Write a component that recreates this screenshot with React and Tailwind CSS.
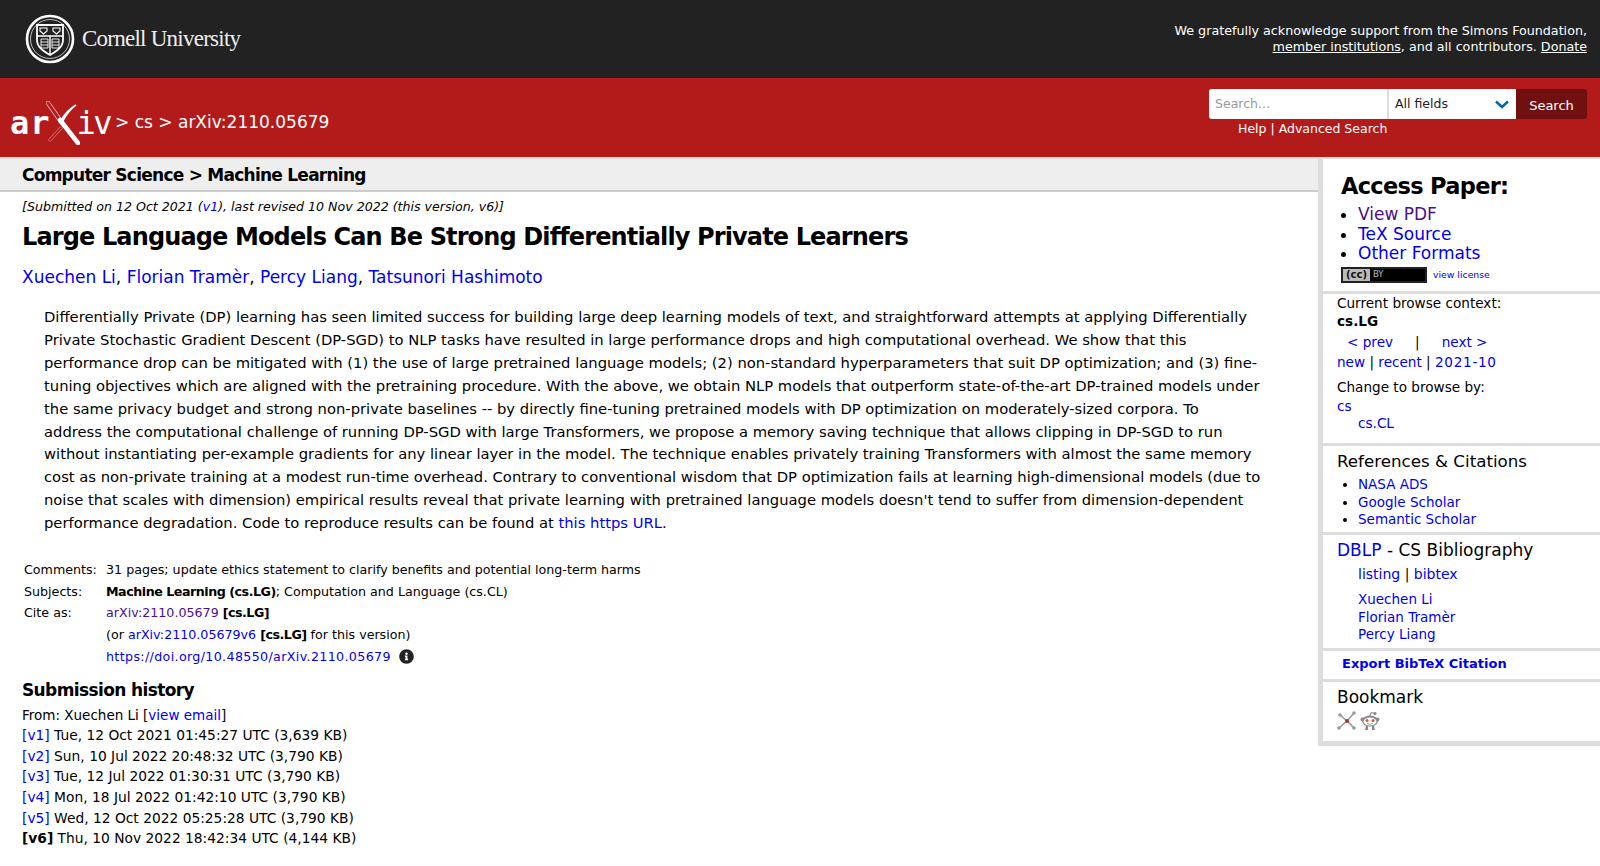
import { FaInfoCircle } from 'react-icons/fa';

const abstractLines = [
  'Differentially Private (DP) learning has seen limited success for building large deep learning models of text, and straightforward attempts at applying Differentially',
  'Private Stochastic Gradient Descent (DP-SGD) to NLP tasks have resulted in large performance drops and high computational overhead. We show that this',
  'performance drop can be mitigated with (1) the use of large pretrained language models; (2) non-standard hyperparameters that suit DP optimization; and (3) fine-',
  'tuning objectives which are aligned with the pretraining procedure. With the above, we obtain NLP models that outperform state-of-the-art DP-trained models under',
  'the same privacy budget and strong non-private baselines -- by directly fine-tuning pretrained models with DP optimization on moderately-sized corpora. To',
  'address the computational challenge of running DP-SGD with large Transformers, we propose a memory saving technique that allows clipping in DP-SGD to run',
  'without instantiating per-example gradients for any linear layer in the model. The technique enables privately training Transformers with almost the same memory',
  "cost as non-private training at a modest run-time overhead. Contrary to conventional wisdom that DP optimization fails at learning high-dimensional models (due to",
  "noise that scales with dimension) empirical results reveal that private learning with pretrained language models doesn't tend to suffer from dimension-dependent",
];

const versions = [
  ['[v1]', 'Tue, 12 Oct 2021 01:45:27 UTC (3,639 KB)'],
  ['[v2]', 'Sun, 10 Jul 2022 20:48:32 UTC (3,790 KB)'],
  ['[v3]', 'Tue, 12 Jul 2022 01:30:31 UTC (3,790 KB)'],
  ['[v4]', 'Mon, 18 Jul 2022 01:42:10 UTC (3,790 KB)'],
  ['[v5]', 'Wed, 12 Oct 2022 05:25:28 UTC (3,790 KB)'],
];

const A = ({ children, className = '' }) => (
  <a href="#" className={`text-[#0000ee] ${className}`}>{children}</a>
);

const CornellSeal = () => (
  <svg width="50" height="50" viewBox="0 0 50 50" fill="none" stroke="#fff">
    <circle cx="25" cy="25" r="23" strokeWidth="2.6" />
    <circle cx="25" cy="25" r="19.5" strokeWidth="0.7" />
    <path d="M12 11h26v15c0 7-6 11-13 15-7-4-13-8-13-15z" strokeWidth="1.8" />
    <path d="M12 22h26M25 22v19" strokeWidth="1.4" />
    <path d="M15 14h7v3l-3.500 3-3.500-3zM28 14h7v3l-3.500 3-3.500-3z" strokeWidth="1.100" />
    <path d="M16 25h7v9h-7zM27 25h7v9h-7zM16 28h7M16 31h7M27 28h7M27 31h7" strokeWidth="0.9" />
  </svg>
);

const ArxivLogo = () => (
  <div className="flex items-center h-[44px] text-white font-['DejaVu_Sans_Mono',monospace] text-[32px] font-bold leading-none">
    <span className="tracking-[1px]">ar</span>
    <svg width="34" height="44" viewBox="0 0 34 44" className="-ml-[5px] -mr-[3px] shrink-0">
      <path d="M2 2 L16 22" stroke="#f2b8b8" strokeWidth="4.500" strokeLinecap="round" />
      <path d="M2 2 L16 22" stroke="#b31b1b" strokeWidth="3" strokeLinecap="round" />
      <path d="M14 19 L32 42" stroke="#fff" strokeWidth="4.500" strokeLinecap="round" />
      <path d="M30 4 Q22 10 17 20 L14 21 Q20 10 30 4z" fill="#fff" stroke="#fff" strokeWidth="1.500" />
      <path d="M15 27 L4 39" stroke="#e8a0a0" strokeWidth="3" strokeLinecap="round" />
      <path d="M15 27 L4 39" stroke="#b31b1b" strokeWidth="2" strokeLinecap="round" />
    </svg>
    <span className="tracking-[-2.500px] font-normal">iv</span>
  </div>
);

const CcBadge = () => (
  <div className="flex items-center w-[86px] h-[16px] bg-black border-2 border-[#222] leading-none overflow-hidden">
    <span className="flex items-center h-full px-[3px] bg-[#bbb] text-[#111] text-[10px] font-bold">(cc)</span>
    <span className="pl-[3px] text-[#bbb] text-[8.500px]">BY</span>
  </div>
);

const BibsonomyIcon = () => (
  <svg width="20" height="20" viewBox="0 0 20 20" stroke="#999" strokeWidth="1.600" fill="#999">
    <path d="M10 10 L3 4 M10 10 L17 2 M10 10 L2 17 M10 10 L17 17" fill="none" />
    <circle cx="3" cy="4" r="1.800" stroke="none" />
    <circle cx="17" cy="2" r="1.800" stroke="none" />
    <circle cx="2" cy="17" r="1.800" stroke="none" />
    <circle cx="17" cy="17" r="1.800" stroke="none" />
    <circle cx="10" cy="10" r="2" fill="#a33" stroke="none" />
  </svg>
);

const RedditIcon = () => (
  <svg width="20" height="20" viewBox="0 0 20 20">
    <ellipse cx="10" cy="10" rx="8" ry="5.500" fill="#888" />
    <circle cx="2.500" cy="8.500" r="2" fill="#888" />
    <circle cx="17.500" cy="8.500" r="2" fill="#888" />
    <circle cx="15" cy="2.500" r="1.600" fill="#888" />
    <path d="M10 5 L11 1.500 L15 2.500" fill="none" stroke="#888" strokeWidth="1" />
    <path d="M6 15h2v4h-3zM12 15h2l1 4h-3z" fill="#888" />
    <ellipse cx="10" cy="10.500" rx="6.500" ry="4" fill="#fff" />
    <circle cx="7" cy="9.500" r="1.500" fill="#e8572a" />
    <circle cx="13" cy="9.500" r="1.500" fill="#e8572a" />
    <path d="M7 12.500q3 1.500 6 0" fill="none" stroke="#888" strokeWidth="0.800" />
  </svg>
);

const Divider = () => <div className="h-[3px] bg-[#ddd]" />;

export default function App() {
  return (
    <div className="min-h-[866px] bg-white text-black font-['DejaVu_Sans',sans-serif]">
      <header className="flex justify-between h-[78px] bg-[#222] text-white">
        <div className="flex items-center gap-[7px] pl-[25px]">
          <CornellSeal />
          <span className="pt-[1px] font-['Liberation_Serif',serif] text-[23px] tracking-[-0.750px] text-[#eee]">Cornell University</span>
        </div>
        <div className="pt-[23px] pr-[13px] text-right text-[12.700px] leading-[16px]">
          <div>We gratefully acknowledge support from the Simons Foundation,</div>
          <div>
            <a href="#" className="underline">member institutions</a>, and all contributors. <a href="#" className="underline">Donate</a>
          </div>
        </div>
      </header>

      <div className="flex justify-between h-[79px] bg-[#b31b1b] text-white">
        <div className="flex items-center gap-[5px] pl-[10px] pt-[10px]">
          <ArxivLogo />
          <span className="text-[17px]">&gt; cs &gt; arXiv:2110.05679</span>
        </div>
        <div className="pt-[11px] pr-[13px]">
          <div className="flex h-[30px] w-[378px]">
            <div className="flex items-center w-[178px] pl-[6px] bg-white rounded-l-[3px] text-[12.500px] text-[#999]">Search...</div>
            <div className="flex items-center justify-between w-[129px] pl-[6px] pr-[7px] bg-white border-l-2 border-[#ddd] text-[12.500px] text-[#222]">
              All fields
              <svg width="14" height="9" viewBox="0 0 14 9" fill="none" stroke="#0068ac" strokeWidth="2.500">
                <path d="M1 1.500 L7 7 L13 1.500" />
              </svg>
            </div>
            <div className="flex items-center justify-center flex-1 pt-[3px] bg-[#701010] rounded-r-[3px] text-[13px]">Search</div>
          </div>
          <div className="pt-[1px] pl-[29px] text-[12.500px] leading-[18px]">Help | Advanced Search</div>
        </div>
      </div>

      <div className="h-[2px] bg-[#d5dfe0]" />

      <div className="flex">
        <main className="flex-1 min-w-0">
          <div className="h-[33px] bg-[#eee] border-b-2 border-[#ccc] pl-[22px] text-[17px] font-bold leading-[32px] tracking-[-0.750px]">
            Computer Science &gt; Machine Learning
          </div>
          <div className="pl-[22px] pt-[6px] text-[12.600px] leading-[18px] italic">
            [Submitted on 12 Oct 2021 (<A>v1</A>), last revised 10 Nov 2022 (this version, v6)]
          </div>
          <h1 className="pl-[22px] pt-[4px] text-[24px] font-bold leading-[34px] whitespace-nowrap tracking-[-0.870px]">
            Large Language Models Can Be Strong Differentially Private Learners
          </h1>
          <div className="pl-[22px] pt-[12px] text-[17px] leading-[22px]">
            <A>Xuechen Li</A>, <A>Florian Tramèr</A>, <A>Percy Liang</A>, <A>Tatsunori Hashimoto</A>
          </div>
          <div className="pl-[44px] pt-[18px] text-[14.750px] leading-[22.900px] whitespace-nowrap">
            {abstractLines.map(line => <div key={line}>{line}</div>)}
            <div>performance degradation. Code to reproduce results can be found at <A>this https URL</A>.</div>
          </div>
          <div className="pl-[24px] pt-[24px] text-[12.670px] leading-[21.700px]">
            <div className="flex">
              <div className="w-[82px]">Comments:</div>
              <div>31 pages; update ethics statement to clarify benefits and potential long-term harms</div>
            </div>
            <div className="flex">
              <div className="w-[82px]">Subjects:</div>
              <div><b className="tracking-[-0.470px]">Machine Learning (cs.LG)</b>; Computation and Language (cs.CL)</div>
            </div>
            <div className="flex">
              <div className="w-[82px]">Cite as:</div>
              <div>
                <a href="#" className="text-[#4a0f8c]">arXiv:2110.05679</a> <b className="tracking-[-0.500px]">[cs.LG]</b>
                <div>(or <A>arXiv:2110.05679v6</A> <b className="tracking-[-0.500px]">[cs.LG]</b> for this version)</div>
                <div className="flex items-center gap-[8px]">
                  <A className="tracking-[0.350px]">https://doi.org/10.48550/arXiv.2110.05679</A>
                  <FaInfoCircle className="text-[#222] text-[15px]" />
                </div>
              </div>
            </div>
          </div>
          <h2 className="pl-[22px] pt-[10px] text-[17px] font-bold leading-[24px] tracking-[-0.620px]">Submission history</h2>
          <div className="pl-[22px] pt-[3px] text-[13.800px] leading-[20.600px]">
            <div className="text-[13.500px]">From: Xuechen Li [<A>view email</A>]</div>
            {versions.map(([v, text]) => (
              <div key={v}><A>{v}</A> {text}</div>
            ))}
            <div><b>[v6]</b> Thu, 10 Nov 2022 18:42:34 UTC (4,144 KB)</div>
          </div>
        </main>

        <aside className="w-[282px] h-[587px] shrink-0 border-l-[5px] border-b-[5px] border-[#ddd]">
          <div className="h-[132px] pl-[18px] pt-[11px]">
            <h2 className="text-[22.500px] font-bold leading-[32px] tracking-[-0.700px]">Access Paper:</h2>
            <ul className="pl-[17px] pt-[3px] text-[17px] leading-[19.500px] list-disc">
              <li><a href="#" className="text-[#4a0f8c]">View PDF</a></li>
              <li><A>TeX Source</A></li>
              <li><A>Other Formats</A></li>
            </ul>
            <div className="flex items-center gap-[6px] pt-[3px]">
              <CcBadge />
              <A className="text-[9.300px]">view license</A>
            </div>
          </div>
          <Divider />
          <div className="h-[149px] pl-[14px] text-[13.600px] leading-[18px]">
            <div>Current browse context:</div>
            <b>cs.LG</b>
            <div className="pt-[2px] pl-[10px] leading-[20px]"><A>&lt; prev</A><span className="pl-[22px]">|</span><span className="pl-[22px]"><A>next &gt;</A></span></div>
            <div className="leading-[20px]"><A>new</A> | <A>recent</A> | <A className="tracking-[0.700px]">2021-10</A></div>
            <div className="pt-[6px]">Change to browse by:</div>
            <div className="pt-[1px]"><A>cs</A></div>
            <div className="pl-[21px] leading-[17px]"><A>cs.CL</A></div>
          </div>
          <Divider />
          <div className="h-[86px] pl-[14px] pt-[1px]">
            <h3 className="text-[16.700px] leading-[28px]">References &amp; Citations</h3>
            <ul className="pl-[21px] pt-[1px] text-[13.500px] leading-[17.500px] list-disc">
              <li><A>NASA ADS</A></li>
              <li><A>Google Scholar</A></li>
              <li><A>Semantic Scholar</A></li>
            </ul>
          </div>
          <Divider />
          <div className="h-[113px] pl-[14px] pt-[1px]">
            <h3 className="text-[17px] leading-[28px]"><A>DBLP</A> - CS Bibliography</h3>
            <div className="pl-[21px] text-[14px] leading-[20px]"><A>listing</A> | <A>bibtex</A></div>
            <div className="pl-[21px] pt-[7px] text-[13.500px] leading-[17.500px]">
              <div><A>Xuechen Li</A></div>
              <div><A>Florian Tramèr</A></div>
              <div><A>Percy Liang</A></div>
            </div>
          </div>
          <Divider />
          <div className="h-[28px] pl-[19px] text-[13px] font-bold leading-[26px]"><A>Export BibTeX Citation</A></div>
          <Divider />
          <div className="pl-[14px] pt-[1px]">
            <h3 className="text-[17px] leading-[28px]">Bookmark</h3>
            <div className="flex gap-[3px]">
              <BibsonomyIcon />
              <RedditIcon />
            </div>
          </div>
        </aside>
      </div>
    </div>
  );
}
